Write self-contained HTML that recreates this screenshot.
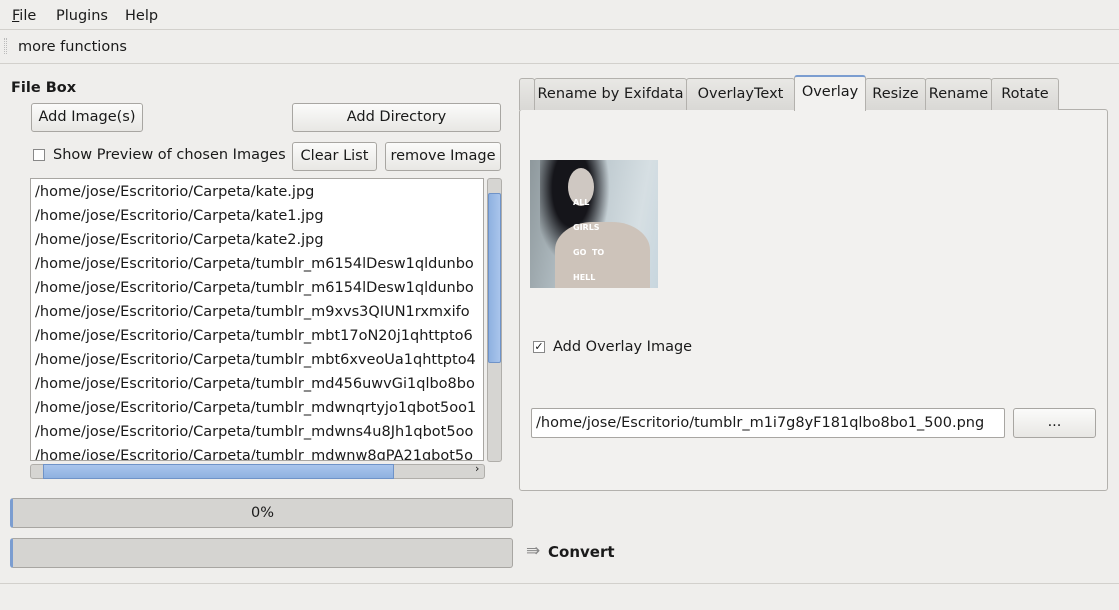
<!DOCTYPE html>
<html><head><style>
*{box-sizing:border-box;margin:0;padding:0}
body{width:1119px;height:610px;background:#efeeec;font-family:"DejaVu Sans","Liberation Sans",sans-serif;font-size:14px;color:#1a1a1a;position:relative;overflow:hidden}
.a{position:absolute;white-space:nowrap}
.btn{position:absolute;border:1px solid #a8a6a2;border-radius:3px;background:linear-gradient(#fbfbfa,#e8e7e4);text-align:center;line-height:26px;font-size:14.5px}
.tab{position:absolute;top:78px;height:32px;border:1px solid #b3b1ad;border-bottom:none;border-radius:3px 3px 0 0;background:linear-gradient(#e9e8e5,#d9d8d5);line-height:30px;text-align:center;font-size:14.5px}
.row{height:24px;line-height:24px;padding-left:4px;font-size:14.5px}
</style></head><body>
<div class="a" style="left:0;top:0;width:1119px;height:30px;background:#efeeec;border-bottom:1px solid #d2d0cc"></div>
<div class="a" style="left:12px;top:8px;font-size:14.5px"><u>F</u>ile</div>
<div class="a" style="left:56px;top:8px;font-size:14.5px">Plugins</div>
<div class="a" style="left:125px;top:8px;font-size:14.5px">Help</div>
<div class="a" style="left:4px;top:38px;width:3px;height:16px;border-left:1px dotted #bbb;border-right:1px dotted #bbb"></div>
<div class="a" style="left:18px;top:39px;font-size:14.5px">more functions</div>
<div class="a" style="left:0;top:63px;width:1119px;height:1px;background:#d2d0cc"></div>
<div class="a" style="left:11px;top:80px;font-weight:bold;font-size:14.5px">File Box</div>
<div class="btn" style="left:31px;top:103px;width:112px;height:29px">Add Image(s)</div>
<div class="btn" style="left:292px;top:103px;width:209px;height:29px">Add Directory</div>
<div class="a" style="left:33px;top:149px;width:12px;height:12px;border:1px solid #888;background:#fff"></div>
<div class="a" style="left:53px;top:147px;font-size:14.5px">Show Preview of chosen Images</div>
<div class="btn" style="left:292px;top:142px;width:85px;height:29px">Clear List</div>
<div class="btn" style="left:385px;top:142px;width:116px;height:29px">remove Image</div>
<div class="a" style="left:30px;top:178px;width:454px;height:283px;background:#fff;border:1px solid #a8a6a2;overflow:hidden;padding-top:1px">
<div class="row">/home/jose/Escritorio/Carpeta/kate.jpg</div>
<div class="row">/home/jose/Escritorio/Carpeta/kate1.jpg</div>
<div class="row">/home/jose/Escritorio/Carpeta/kate2.jpg</div>
<div class="row">/home/jose/Escritorio/Carpeta/tumblr_m6154lDesw1qldunbo</div>
<div class="row">/home/jose/Escritorio/Carpeta/tumblr_m6154lDesw1qldunbo</div>
<div class="row">/home/jose/Escritorio/Carpeta/tumblr_m9xvs3QIUN1rxmxifo</div>
<div class="row">/home/jose/Escritorio/Carpeta/tumblr_mbt17oN20j1qhttpto6</div>
<div class="row">/home/jose/Escritorio/Carpeta/tumblr_mbt6xveoUa1qhttpto4</div>
<div class="row">/home/jose/Escritorio/Carpeta/tumblr_md456uwvGi1qlbo8bo</div>
<div class="row">/home/jose/Escritorio/Carpeta/tumblr_mdwnqrtyjo1qbot5oo1</div>
<div class="row">/home/jose/Escritorio/Carpeta/tumblr_mdwns4u8Jh1qbot5oo</div>
<div class="row">/home/jose/Escritorio/Carpeta/tumblr_mdwnw8qPA21qbot5o</div>
</div>
<div class="a" style="left:487px;top:178px;width:15px;height:284px;background:#d6d5d2;border:1px solid #b0aeaa;border-radius:3px"></div>
<div class="a" style="left:488px;top:193px;width:13px;height:170px;background:linear-gradient(90deg,#8fb1e0,#a9c5ec);border:1px solid #6f93c8;border-radius:2px"></div>
<div class="a" style="left:30px;top:464px;width:455px;height:15px;background:#d6d5d2;border:1px solid #b0aeaa;border-radius:3px"></div>
<div class="a" style="left:43px;top:464px;width:351px;height:15px;background:linear-gradient(#a9c5ec,#8fb1e0);border:1px solid #6f93c8"></div>
<div class="a" style="left:475px;top:462px;font-size:11px">›</div>
<div class="a" style="left:10px;top:498px;width:503px;height:30px;background:#d5d4d1;border:1px solid #a8a6a2;border-radius:3px;border-left:3px solid #7b9dd0;text-align:center;line-height:28px;font-size:14.5px">0%</div>
<div class="a" style="left:10px;top:538px;width:503px;height:30px;background:#d5d4d1;border:1px solid #a8a6a2;border-radius:3px;border-left:3px solid #7b9dd0"></div>
<div class="a" style="left:526px;top:541px;color:#888;font-size:17px">⇛</div>
<div class="a" style="left:548px;top:543px;font-weight:bold;font-size:15px">Convert</div>
<div class="a" style="left:0;top:583px;width:1119px;height:1px;background:#d2d0cc"></div>
<div class="a" style="left:519px;top:109px;width:589px;height:382px;border:1px solid #b3b1ad;border-radius:3px;background:#f2f1ef"></div>
<div class="tab" style="left:519px;width:16px"></div>
<div class="tab" style="left:534px;width:153px">Rename by Exifdata</div>
<div class="tab" style="left:686px;width:109px">OverlayText</div>
<div class="tab" style="left:794px;top:75px;height:36px;width:72px;background:#f2f1ef;border-top:2px solid #7b9dd0">Overlay</div>
<div class="tab" style="left:865px;width:61px">Resize</div>
<div class="tab" style="left:925px;width:67px">Rename</div>
<div class="tab" style="left:991px;width:68px">Rotate</div>
<div class="a" style="left:530px;top:160px;width:128px;height:128px;background:linear-gradient(100deg,#8e989c 0%,#b8c4ca 40%,#d6dfe3 80%,#c8d6de 100%);overflow:hidden">
<div class="a" style="left:10px;top:-5px;width:70px;height:110px;background:radial-gradient(ellipse at 45% 30%,#15151a 35%,rgba(30,30,35,0) 70%)"></div>
<div class="a" style="left:38px;top:8px;width:26px;height:38px;border-radius:50%;background:#cfc8c2"></div>
<div class="a" style="left:25px;top:62px;width:95px;height:70px;border-radius:40% 40% 0 0;background:#cdc3ba"></div>
<div class="a" style="left:43px;top:30px;color:#fff;font-size:8px;font-weight:bold;line-height:25px;white-space:normal">ALL<br>GIRLS<br>GO &nbsp;TO<br>HELL</div>
</div>
<div class="a" style="left:533px;top:341px;width:12px;height:12px;border:1px solid #888;background:#fff;font-size:11px;line-height:10px;text-align:center">✓</div>
<div class="a" style="left:553px;top:339px;font-size:14.5px">Add Overlay Image</div>
<div class="a" style="left:531px;top:408px;width:474px;height:30px;background:#fff;border:1px solid #a8a6a2;border-radius:2px;line-height:28px;padding-left:4px;font-size:14.5px">/home/jose/Escritorio/tumblr_m1i7g8yF181qlbo8bo1_500.png</div>
<div class="btn" style="left:1013px;top:408px;width:83px;height:30px">...</div>
</body></html>
